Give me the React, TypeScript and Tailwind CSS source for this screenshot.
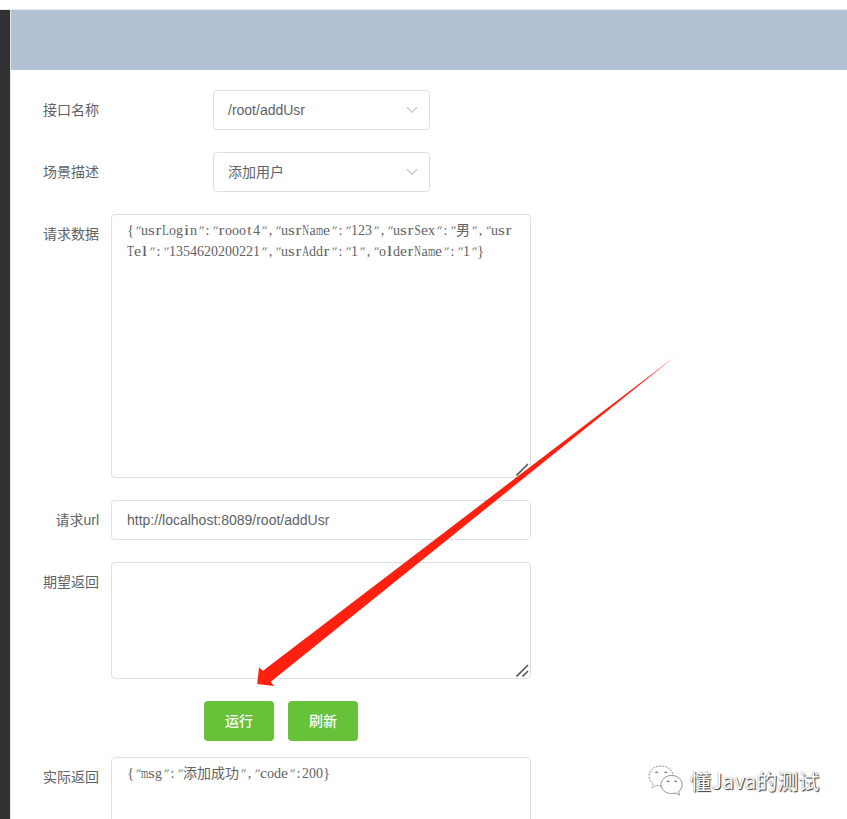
import type { ReactNode } from "react"
import clsx from "clsx"

const REQUEST_LINES = [
    '{"usrLogin":"rooot4","usrName":"123","usrSex":"男","usr',
    'Tel":"1354620200221","usrAddr":"1","olderName":"1"}',
]
const RESPONSE_LINES = ['{"msg":"添加成功","code":200}']

function FormItem({ label, children }: { label: string; children: ReactNode }) {
    return (
        <div className="flex items-start">
            <label className="w-[100px] shrink-0 pr-3 text-right leading-10 whitespace-nowrap">{label}</label>
            {children}
        </div>
    )
}

function Select({ value }: { value: string }) {
    return (
        <div className="ml-[102px] flex h-10 w-[217px] items-center justify-between rounded border border-[#dcdfe6] pr-[11px] pl-[14px]">
            <span>{value}</span>
            <svg width="12" height="8" viewBox="0 0 12 8" fill="none" stroke="#c0c4cc" strokeWidth="1.2">
                <path d="M1 1.2 6 6.3 11 1.2" />
            </svg>
        </div>
    )
}

// half-width glyphs take 7px, full-width ones 14px; letters are stretched or squeezed to fill their cell
function CodeLine({ text }: { text: string }) {
    return (
        <div className="flex h-[21px] whitespace-pre">
            {Array.from(text).map((char, i) => (
                <span
                    key={i}
                    className={clsx(
                        "flex shrink-0 justify-center",
                        /[\u4e00-\u9fff]/.test(char) ? "w-[14px]" : "w-[7px]",
                        /[mNA]/.test(char) && "scale-x-[0.66]",
                        /[LTS]/.test(char) && "scale-x-[0.8]",
                        /[rs]/.test(char) && "scale-x-[1.25]",
                        /[il]/.test(char) && "scale-x-[1.45]",
                        /[etc]/.test(char) && "scale-x-[1.12]",
                        char === '"' && "-skew-x-[24deg] text-[13px]",
                    )}
                >
                    {char}
                </span>
            ))}
        </div>
    )
}

function TextArea({ className, lines = [], grip = true }: { className: string; lines?: string[]; grip?: boolean }) {
    return (
        <div
            className={clsx(
                "relative w-[420px] rounded border border-[#dcdfe6] px-[15px] py-[5px] font-['Liberation_Serif','Noto_Sans_CJK_SC',serif] text-[14px] leading-[21px]",
                className,
            )}
        >
            {lines.map((line) => (
                <CodeLine key={line} text={line} />
            ))}
            {grip && (
                <svg className="absolute right-[1px] bottom-[1px]" width="13" height="13" stroke="#555" strokeWidth="1.6">
                    <path d="M.5 12.5 12 1M6.5 12.5 12 7" />
                </svg>
            )}
        </div>
    )
}

function Button({ children }: { children: ReactNode }) {
    return <button className="h-10 w-[70px] rounded bg-[#67c23a] font-medium text-white">{children}</button>
}

function Arrow() {
    return (
        <svg className="pointer-events-none absolute top-0 left-0" width="847" height="819" fill="#ff2010">
            <path d="M675 356.5 263 670.7 259 667.5 257.2 683.9 274 686 270.7 681.7Z" />
        </svg>
    )
}

function Watermark() {
    return (
        <div className="absolute top-[764px] left-[648px] flex items-center gap-[7px]">
            <svg width="35" height="32" viewBox="0 0 35 32" fill="#fff" stroke="#777" strokeWidth=".8">
                <path d="M13 2C6 2 1 6.4 1 12c0 3.3 1.6 6 4.4 7.8L4 24l5-2.6c1.3.4 2.7.6 4 .6 7 0 12-4.4 12-10S20 2 13 2Z" strokeDasharray="2 1" />
                <path d="M23.5 11.5c-6 0-10.5 4-10.5 9s4.5 9 10.5 9c1.4 0 2.7-.2 3.9-.6L31.5 31l-1-3.4c2.3-1.7 3.7-4.2 3.7-7.1 0-5-4.7-9-10.7-9Z" />
                <path d="M7.5 9q1.2-2 2.4 0M16.5 9q1.2-2 2.4 0M19 18q1-1.8 2.2 0M26.5 18q1-1.8 2.2 0" fill="none" strokeWidth="1.2" />
            </svg>
            <span className="font-['Noto_Sans_CJK_SC',sans-serif] text-[21px] leading-8 whitespace-nowrap text-white [text-shadow:1px_1px_1px_#333,0_0_1px_#777]">
                懂Java的测试
            </span>
        </div>
    )
}

function App() {
    return (
        <div className="relative flex h-[819px] w-[847px] flex-col overflow-hidden bg-white font-['Liberation_Sans','Noto_Sans_CJK_SC',sans-serif] text-sm text-[#606266]">
            <div className="h-[10px] shrink-0 border-b border-[#e8e8ea]" />
            <div className="flex min-h-0 flex-1">
                <aside className="w-[11px] shrink-0 border-r border-[#e6e6e6] bg-[#303133]" />
                <main className="min-w-0 flex-1">
                    <header className="h-[60px] bg-[#b3c0d1]" />
                    <form className="flex flex-col gap-[22px] pt-5">
                        <FormItem label="接口名称">
                            <Select value="/root/addUsr" />
                        </FormItem>
                        <FormItem label="场景描述">
                            <Select value="添加用户" />
                        </FormItem>
                        <FormItem label="请求数据">
                            <TextArea className="h-[264px]" lines={REQUEST_LINES} />
                        </FormItem>
                        <FormItem label="请求url">
                            <div className="h-10 w-[420px] rounded border border-[#dcdfe6] px-[15px] leading-[38px]">
                                http://localhost:8089/root/addUsr
                            </div>
                        </FormItem>
                        <FormItem label="期望返回">
                            <TextArea className="h-[117px]" />
                        </FormItem>
                        <div className="-mb-1.5 ml-[193px] flex gap-[14px]">
                            <Button>运行</Button>
                            <Button>刷新</Button>
                        </div>
                        <FormItem label="实际返回">
                            <TextArea className="h-[117px]" lines={RESPONSE_LINES} grip={false} />
                        </FormItem>
                    </form>
                </main>
            </div>
            <Arrow />
            <Watermark />
        </div>
    )
}

export default App
